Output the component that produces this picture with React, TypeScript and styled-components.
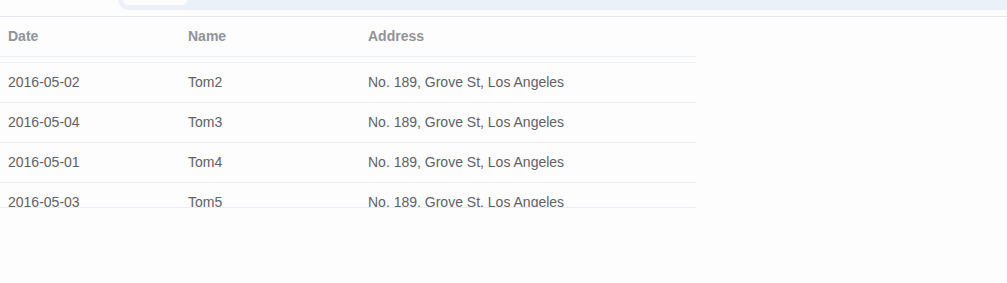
import { useLayoutEffect, useRef } from "react";
import styled, { createGlobalStyle } from "styled-components";

const GlobalStyle = createGlobalStyle`
  html, body {
    margin: 0;
    padding: 0;
    background: #fdfdfd;
    font-family: "Liberation Sans", Arial, sans-serif;
  }
`;

const Page = styled.div`
  width: 1007px;
  height: 283px;
  overflow: hidden;
`;

const TabBar = styled.div`
  height: 16px;
  border-bottom: 1px solid #e4e7ed;
`;

const TabStrip = styled.div`
  margin-left: 118px;
  height: 10px;
  background: #ecf0f9;
  border-bottom-left-radius: 10px;
  padding-left: 5px;
`;

const ActiveTab = styled.div`
  width: 64px;
  height: 5px;
  background: #fdfdfd;
  border-bottom-left-radius: 6px;
  border-bottom-right-radius: 6px;
`;

const Table = styled.div`
  width: 696px;
  border-bottom: 1px solid #ebeef5;
`;

const Row = styled.div<{ $head?: boolean }>`
  display: grid;
  grid-template-columns: 180px 180px 336px;
  height: 39px;
  border-bottom: 1px solid #ebeef5;
  align-items: center;
  font-size: 14px;
  color: ${(p) => (p.$head ? "#909399" : "#606266")};
  font-weight: ${(p) => (p.$head ? 700 : 400)};
`;

const Cell = styled.div`
  padding: 0 0 2px 8px;
  white-space: nowrap;
`;

const Body = styled.div`
  height: 150px;
  overflow: hidden;
`;

const rows = [
  { date: "2016-05-03", name: "Tom1" },
  { date: "2016-05-02", name: "Tom2" },
  { date: "2016-05-04", name: "Tom3" },
  { date: "2016-05-01", name: "Tom4" },
  { date: "2016-05-03", name: "Tom5" },
  { date: "2016-05-02", name: "Tom6" },
];

export default function App() {
  const bodyRef = useRef<HTMLDivElement>(null);

  // the body is scrolled so that only the bottom edge of the first row shows
  useLayoutEffect(() => {
    if (bodyRef.current) bodyRef.current.scrollTop = 34;
  }, []);

  return (
    <Page>
      <GlobalStyle />
      <TabBar>
        <TabStrip>
          <ActiveTab />
        </TabStrip>
      </TabBar>
      <Table>
        <Row $head>
          <Cell>Date</Cell>
          <Cell>Name</Cell>
          <Cell>Address</Cell>
        </Row>
        <Body ref={bodyRef}>
          {rows.map((r) => (
            <Row key={r.name}>
              <Cell>{r.date}</Cell>
              <Cell>{r.name}</Cell>
              <Cell>No. 189, Grove St, Los Angeles</Cell>
            </Row>
          ))}
        </Body>
      </Table>
    </Page>
  );
}
